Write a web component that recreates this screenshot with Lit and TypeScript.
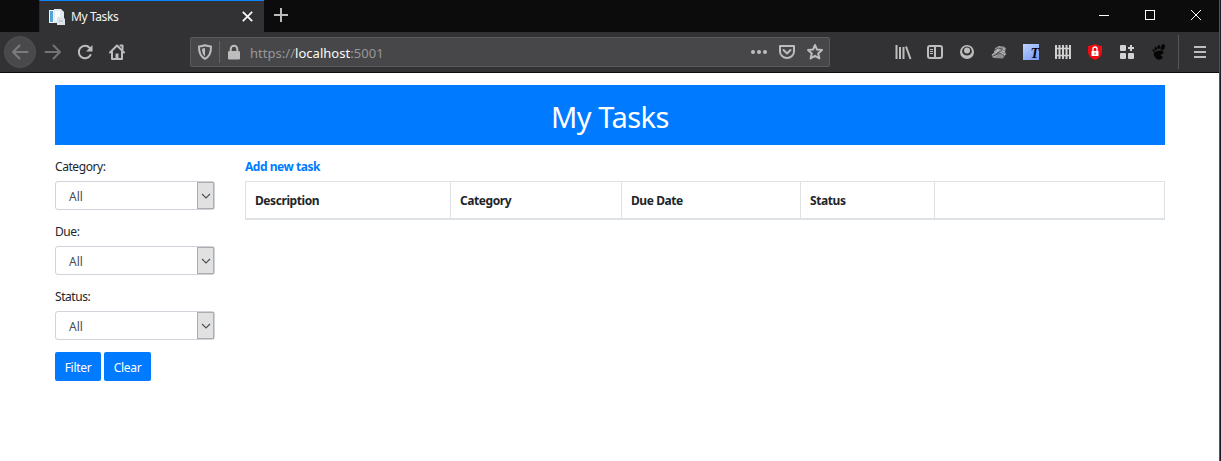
import { LitElement, html, css, svg } from "lit";
import { customElement, property } from "lit/decorators.js";

const icons: Record<string, unknown> = {
  back: svg`<path class="s" d="M15.500 8H1M7.500 1.500L1 8l6.500 6.500"/>`,
  forward: svg`<path class="s" d="M.5 8H15M8.500 1.500L15 8l-6.500 6.500"/>`,
  reload: svg`<path class="s" d="M13.500 11A6.200 6.200 0 1 1 12.600 3.800"/><path class="f" d="M15.500 1v6.500H9z"/>`,
  home: svg`<path class="s" d="M1 8.500L8 1.500l7 7M3 8v7h10V8"/><path class="f" d="M6.500 9.500h3V15h-3z"/><path d="M11.500 1.500h2v4" class="s"/>`,
  shield: svg`<path class="s" d="M8 1.200c2 .8 4 1.100 6 1.200C14.200 9 12.500 12.600 8 14.900 3.500 12.600 1.800 9 2 2.400 4 2.300 6 2 8 1.200z"/><path class="f" d="M8 4v8.300C5.800 10.800 5 8.500 5 4.800z"/>`,
  lock: svg`<path class="s" d="M4.700 8V5a3.300 3.300 0 0 1 6.600 0v3"/><rect class="f" x="2" y="7" width="12" height="8.500" rx="1.200"/>`,
  dots: svg`<circle class="f" cx="2" cy="8" r="2"/><circle class="f" cx="8" cy="8" r="2"/><circle class="f" cx="14" cy="8" r="2"/>`,
  pocket: svg`<path class="s" d="M1 2h14v5.500a7 6.500 0 0 1-14 0zM4.500 6L8 9.500 11.500 6"/>`,
  star: svg`<path class="s" d="M8 1l2 4.600 5 .5-3.800 3.300 1.200 5L8 11.800l-4.400 2.600 1.200-5L1 6.100l5-.5z"/>`,
  library: svg`<path class="b" d="M1.500 1v14M5 3v12M8.500 3v12M11 2.500L15.500 15"/>`,
  sidebar: svg`<rect class="s" x="1" y="2" width="14" height="12" rx="2"/><path class="b" d="M8 2v12"/><path class="n" d="M3 5.500h3M3 7.500h3M3 9.500h3"/>`,
  account: svg`<circle class="f" cx="8" cy="8" r="7"/><path d="M3.500 9a4.800 4.800 0 1 1 9 0Q11 11.500 8 11.500T3.500 9z" fill="#333335"/><circle class="f" cx="8" cy="6.500" r="3"/>`,
  badger: svg`<path d="M.5 11l3-3 .5-4 4-2 5 .5 2 2-1 3.500 1.500 2-2 2-1.500 2.500L2 14z" fill="#8d8d8f"/><path d="M3 8l5-4 6 1M1 11l7-5 6 2M3 13l6-5 5 3M5 4l7 8M8 2l-3 9" fill="none" stroke="#c4c4c5" stroke-width=".8"/><path d="M4 6l3-2 5 1M2 12l7-3 4 3M5 10l6-4" fill="none" stroke="#3b3b3d" stroke-width=".8"/>`,
  fence: svg`<path fill="#cfcfcf" d="M0 1h2v14H0zM3.500 1h2v14h-2zM7 1h2v14H7zM10.500 1h2v14h-2zM14 1h2v14h-2z"/><path stroke="#cfcfcf" stroke-width="1.400" d="M0 4.500h16M0 11.500h16"/>`,
  blocker: svg`<path fill="#f00b12" d="M8 0q4 2 7 2v6q0 5-7 8-7-3-7-8V2q3 0 7-2z"/><rect x="4.500" y="7" width="7" height="5" fill="#fff"/><path d="M6 7V5a2 2 0 0 1 4 0v2" fill="none" stroke="#fff" stroke-width="1.300"/><path d="M8 8.500v2" stroke="#e90b12"/>`,
  grid: svg`<path fill="#d3d3d4" d="M2 1h4q1 0 1 1v4q0 1-1 1H2Q1 7 1 6V2q0-1 1-1zM2 9h4q1 0 1 1v4q0 1-1 1H2q-1 0-1-1v-4q0-1 1-1zM10 9h4q1 0 1 1v4q0 1-1 1h-4q-1 0-1-1v-4q0-1 1-1z"/><path stroke="#d3d3d4" stroke-width="2" d="M12 1v6M9 4h6"/>`,
  foot: svg`<g fill="#050505"><ellipse cx="11.800" cy="3.200" rx="2" ry="3.200" transform="rotate(18 11.800 3.200)"/><ellipse cx="7.700" cy="3" rx="1.400" ry="2"/><ellipse cx="4.800" cy="4.500" rx="1.200" ry="1.700" transform="rotate(-15 4.800 4.500)"/><ellipse cx="2.700" cy="6.500" rx="1" ry="1.400" transform="rotate(-25 2.700 6.500)"/><path d="M2.800 9C5 6.200 12.500 5.600 12.500 8.600c0 1.700-3.200 1.700-2.900 2.900.2.900 2 0 2 1.500-.2 3-4 3.500-6.200 1.800C3.500 13.200 2.300 10.500 2.800 9z"/></g>`,
  menu: svg`<path class="b" d="M2 3h12M2 8h12M2 13h12"/>`,
  plus: svg`<path class="b" d="M8 1v14M1 8h14"/>`,
  close: svg`<path class="b" d="M3 3l10 10m0-10L3 13"/>`,
  min: svg`<path d="M3 8.500h10" stroke="#fff"/>`,
  max: svg`<rect x="3.500" y="3.500" width="9" height="9" fill="none" stroke="#fff"/>`,
  quit: svg`<path d="M3 3l10 10M13 3L3 13" stroke="#fff" fill="none"/>`,
  chevron: svg`<path class="n" d="M4 6l4 4 4-4"/>`,
  pages: svg`<path d="M0 1h5l1-1v14H0z" fill="#eef4fa"/><path d="M1 2h3v11H1z" fill="#54a5d8"/><path d="M5 0h7l3 3v11H5z" fill="#e2e9f1"/><path d="M6 2h5v10H6z" fill="#f9fbfd"/><path d="M9 8h5l2 2v6H8V9z" fill="#dce2e9"/><path d="M10 12h4" stroke="#aab8c5"/>`,
};

@customElement("ui-icon")
class UiIcon extends LitElement {
  @property() name = "";
  static styles = css`
    :host { display: block; width: 16px; height: 16px; flex: none; }
    svg { display: block; width: 100%; height: 100%; overflow: visible; }
    .s { fill: none; stroke: currentColor; stroke-width: 2; stroke-linecap: round; stroke-linejoin: round; }
    .b { fill: none; stroke: currentColor; stroke-width: 2; }
    .n { fill: none; stroke: currentColor; stroke-width: 1.1; }
    .f { fill: currentColor; }
  `;
  render() { return html`<svg viewBox="0 0 16 16">${icons[this.name]}</svg>`; }
}

@customElement("browser-chrome")
class BrowserChrome extends LitElement {
  static styles = css`
    * { box-sizing: border-box; }
    :host { display: block; height: 73px; background: #323234; border-bottom: 1px solid #0c0c0d; color: #bdbdbe; font-family: "Noto Sans", sans-serif; }
    .tabs { height: 32px; display: flex; background: #0c0c0d; padding-left: 39px; }
    .tab { width: 225px; height: 32px; display: flex; align-items: center; padding: 1px 9px 0 9px; background: #323234; border-top: 1px solid #0a84ff; border-left: 1px solid #29292b; color: #f5f5f6; }
    .title { font-size: 12px; letter-spacing: -.4px; margin-left: 6px; flex: 1; line-height: 18px; white-space: nowrap; }
    .close { width: 15px; height: 15px; margin-top: -2px; }
    .plus { margin: 7px 0 0 9px; }
    .spacer { flex: 1; }
    .windows { display: flex; gap: 30px; padding: 7px 15px 0 0; }
    .toolbar { display: flex; height: 40px; align-items: center; padding-left: 4px; }
    .back { width: 32px; height: 32px; display: grid; place-items: center; border-radius: 50%; background: #49494b; border: 1px solid #515153; color: #7b7b7d; }
    .forward { margin-left: 9px; color: #737375; }
    .reload, .home { margin-left: 16px; }
    .address { width: 640px; height: 30px; margin-left: 65px; display: flex; align-items: center; padding: 0 6px; border: 1px solid #5b5b5d; border-radius: 2px; background: #474749; }
    .divider { width: 1px; height: 22px; background: #646466; margin: 0 6px; }
    .url { font-size: 13px; letter-spacing: .03px; margin-left: 8px; flex: 1; color: #97979a; padding-top: 2px; line-height: 18px; }
    .host { color: #fafafa; }
    .actions { display: flex; gap: 12px; }
    .tools { display: flex; gap: 16px; margin-left: 65px; }
    .translate { width: 16px; height: 16px; background: linear-gradient(145deg, #c0d4ff, #7298ef); color: #050515; font: italic bold 14px/20px "Liberation Serif", serif; text-align: right; }
    .bar { width: 1px; height: 34px; background: #565658; margin: 0 13px 0 11px; }
  `;
  render() {
    return html`
      <div class="tabs">
        <div class="tab"><ui-icon name="pages"></ui-icon><span class="title">My Tasks</span><ui-icon class="close" name="close"></ui-icon></div>
        <ui-icon class="plus" name="plus"></ui-icon><div class="spacer"></div>
        <div class="windows"><ui-icon name="min"></ui-icon><ui-icon name="max"></ui-icon><ui-icon name="quit"></ui-icon></div>
      </div>
      <div class="toolbar">
        <div class="back"><ui-icon name="back"></ui-icon></div><ui-icon class="forward" name="forward"></ui-icon>
        <ui-icon class="reload" name="reload"></ui-icon><ui-icon class="home" name="home"></ui-icon>
        <div class="address"><ui-icon name="shield"></ui-icon><div class="divider"></div><ui-icon name="lock"></ui-icon>
          <div class="url">https://<span class="host">localhost</span>:5001</div>
          <div class="actions"><ui-icon name="dots"></ui-icon><ui-icon name="pocket"></ui-icon><ui-icon name="star"></ui-icon></div>
        </div>
        <div class="tools">${["library", "sidebar", "account", "badger"].map(n => html`<ui-icon name=${n}></ui-icon>`)}
          <div class="translate">T</div>${["fence", "blocker", "grid", "foot"].map(n => html`<ui-icon name=${n}></ui-icon>`)}
        </div>
        <div class="bar"></div><ui-icon name="menu"></ui-icon>
      </div>`;
  }
}

@customElement("app-root")
class AppRoot extends LitElement {
  static styles = css`
    * { box-sizing: border-box; }
    :host { display: block; width: 1221px; height: 461px; overflow: hidden; background: #fff; color: #212529; font-family: "Noto Sans", sans-serif; font-size: 12px; line-height: 18px; }
    .window { display: grid; grid-template-columns: 1fr 2px; height: 461px; }
    .edge { background: #1d1c2b; border-left: 1px solid #e81123; }
    main { padding: 12px 54px 0 55px; }
    h1 { margin: 0; height: 60px; background: #007bff; color: #fff; font-size: 29px; font-weight: 400; letter-spacing: -.5px; line-height: 63px; text-align: center; }
    .content { display: grid; grid-template-columns: 160px 920px; gap: 30px; padding-top: 13px; }
    .field { height: 65px; }
    label { display: block; height: 23px; letter-spacing: -.43px; }
    .select { width: 160px; height: 29px; display: flex; border: 1px solid #ced4da; border-radius: 3px; color: #495057; padding-left: 13px; }
    .value { flex: 1; line-height: 29px; }
    .arrow { width: 17px; height: 27px; background: #e1e1e1; border: 1px solid #adadad; display: flex; justify-content: center; align-items: center; }
    .buttons { display: flex; gap: 3px; margin-top: -1px; }
    button { height: 29px; border: 0; border-radius: 2px; background: #007bff; color: #fff; font: 12px/30px "Noto Sans", sans-serif; letter-spacing: -.3px; padding: 1px 0 0; width: 46px; }
    .clear { width: 47px; }
    a { display: block; height: 23px; color: #007bff; font-weight: 700; letter-spacing: -.46px; }
    table { width: 920px; height: 39px; table-layout: fixed; border-collapse: separate; border-spacing: 0; border-left: 1px solid #dee2e6; }
    th { padding: 2px 9px 0; height: 39px; border: 1px solid #dee2e6; border-left: 0; border-bottom-width: 2px; text-align: left; letter-spacing: -.42px; }
  `;
  render() {
    const columns = [["Description", 205], ["Category", 171], ["Due Date", 179], ["Status", 134], ["", 230]] as const;
    return html`<div class="window"><div>
      <browser-chrome></browser-chrome>
      <main><h1>My Tasks</h1><div class="content">
        <section>${["Category:", "Due:", "Status:"].map(text => html`<div class="field"><label>${text}</label><div class="select"><span class="value">All</span><span class="arrow"><ui-icon name="chevron"></ui-icon></span></div></div>`)}
          <div class="buttons"><button>Filter</button><button class="clear">Clear</button></div>
        </section>
        <section><a>Add new task</a><table><colgroup>${columns.map(c => html`<col style="width:${c[1]}px">`)}</colgroup><thead><tr>${columns.map(c => html`<th>${c[0]}</th>`)}</tr></thead></table></section>
      </div></main></div><div class="edge"></div></div>`;
  }
}
